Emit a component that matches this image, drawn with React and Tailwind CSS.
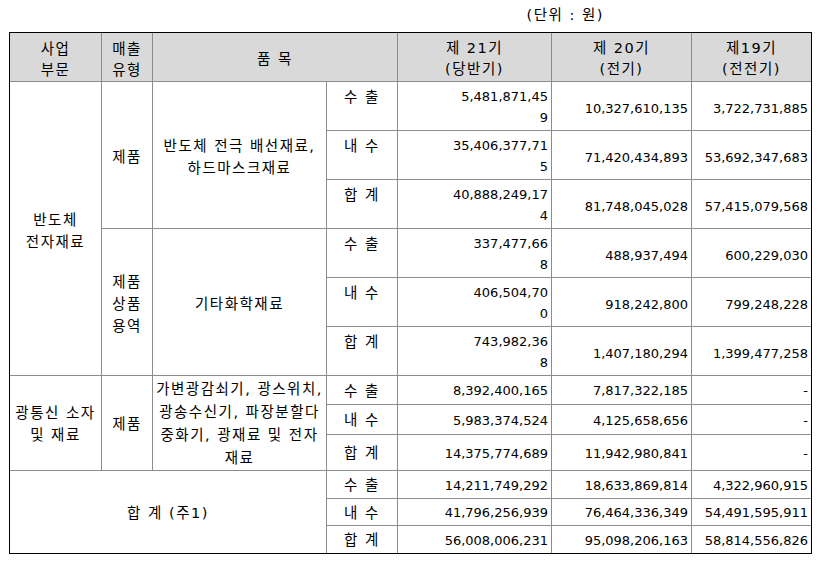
const kr = "font-['DejaVu_Sans','Noto_Sans_CJK_KR',sans-serif] text-[14.5px] tracking-[1.5px] leading-[22px]";
const hd = "font-['DejaVu_Sans','Noto_Sans_CJK_KR',sans-serif] text-[14.5px] tracking-[1.5px] leading-[21px]";
const num = "font-['DejaVu_Sans','Noto_Sans_CJK_KR',sans-serif] text-[13px] leading-[21px]";

// border helpers: every cell draws its right and bottom line, the wrapper draws the outer frame
const Cell = ({ children, className = '', last = false, bottom = false, ...rest }) => (
  <td
    {...rest}
    className={
      (last ? '' : 'border-r ') +
      (bottom ? '' : 'border-b ') +
      'border-[#8c8c8c] p-0 text-black whitespace-nowrap ' +
      className
    }
  >
    {children}
  </td>
);

const Num = ({ v, last, bottom, wrap, tall }) => (
  <Cell
    last={last}
    bottom={bottom}
    className={
      num +
      ' text-right pr-[3px] ' +
      (wrap ? 'align-top pt-[4px]' : tall ? 'align-middle pt-[4px]' : 'align-middle pt-[1px]')
    }
  >
    {wrap ? (
      <>
        {wrap[0]}
        <br />
        {wrap[1]}
      </>
    ) : (
      v
    )}
  </Cell>
);

const Label = ({ text, top, bottom }) => (
  <Cell bottom={bottom} className={kr + ' text-center ' + (top ? 'align-top pt-[4px]' : 'align-middle pt-[1px]')}>
    {text}
  </Cell>
);

const App = () => {
  return (
    <div className="w-[825px] h-[565px] bg-white pt-[5px] pl-[9px]">
      <div className={hd + ' w-[595px] text-right h-[21px] mb-[6px] text-black'}>(단위 : 원)</div>

      <div className="w-[803px] border border-black">
        <table className="table-fixed w-[801px] border-separate border-spacing-0">
          <colgroup>
            <col className="w-[92px]" />
            <col className="w-[51px]" />
            <col className="w-[174px]" />
            <col className="w-[71px]" />
            <col className="w-[154px]" />
            <col className="w-[140px]" />
            <col className="w-[119px]" />
          </colgroup>
          <thead>
            <tr className="h-[49px] bg-[#d9d9d9]">
              <Cell className={hd + ' text-center align-middle pt-[6px]'}>
                사업
                <br />
                부문
              </Cell>
              <Cell className={hd + ' text-center align-middle pt-[6px]'}>
                매출
                <br />
                유형
              </Cell>
              <Cell colSpan={2} className={hd + ' text-center align-middle pt-[4px]'}>
                품 목
              </Cell>
              <Cell className={hd + ' text-center align-middle pt-[4px]'}>
                제 21기
                <br />
                (당반기)
              </Cell>
              <Cell className={hd + ' text-center align-middle pt-[4px]'}>
                제 20기
                <br />
                (전기)
              </Cell>
              <Cell last className={hd + ' text-center align-middle pt-[4px]'}>
                제19기
                <br />
                (전전기)
              </Cell>
            </tr>
          </thead>
          <tbody>
            {/* 반도체 전자재료 - 제품 */}
            <tr className="h-[49px]">
              <Cell rowSpan={6} className={kr + ' text-center align-middle pt-[4px]'}>
                반도체
                <br />
                전자재료
              </Cell>
              <Cell rowSpan={3} className={kr + ' text-center align-middle pt-[4px]'}>
                제품
              </Cell>
              <Cell rowSpan={3} className={kr + ' text-center align-middle pt-[4px]'}>
                반도체 전극 배선재료,
                <br />
                하드마스크재료
              </Cell>
              <Label text="수 출" top />
              <Num wrap={['5,481,871,45', '9']} />
              <Num v="10,327,610,135" tall />
              <Num v="3,722,731,885" tall last />
            </tr>
            <tr className="h-[49px]">
              <Label text="내 수" top />
              <Num wrap={['35,406,377,71', '5']} />
              <Num v="71,420,434,893" tall />
              <Num v="53,692,347,683" tall last />
            </tr>
            <tr className="h-[49px]">
              <Label text="합 계" top />
              <Num wrap={['40,888,249,17', '4']} />
              <Num v="81,748,045,028" tall />
              <Num v="57,415,079,568" tall last />
            </tr>

            {/* 반도체 전자재료 - 제품 상품 용역 */}
            <tr className="h-[49px]">
              <Cell rowSpan={3} className={kr + ' text-center align-middle pt-[4px]'}>
                제품
                <br />
                상품
                <br />
                용역
              </Cell>
              <Cell rowSpan={3} className={kr + ' text-center align-middle pt-[4px]'}>
                기타화학재료
              </Cell>
              <Label text="수 출" top />
              <Num wrap={['337,477,66', '8']} />
              <Num v="488,937,494" tall />
              <Num v="600,229,030" tall last />
            </tr>
            <tr className="h-[49px]">
              <Label text="내 수" top />
              <Num wrap={['406,504,70', '0']} />
              <Num v="918,242,800" tall />
              <Num v="799,248,228" tall last />
            </tr>
            <tr className="h-[49px]">
              <Label text="합 계" top />
              <Num wrap={['743,982,36', '8']} />
              <Num v="1,407,180,294" tall />
              <Num v="1,399,477,258" tall last />
            </tr>

            {/* 광통신 소자 및 재료 */}
            <tr className="h-[29px]">
              <Cell rowSpan={3} className={kr + ' text-center align-middle pt-[2px]'}>
                광통신 소자
                <br />
                및 재료
              </Cell>
              <Cell rowSpan={3} className={kr + ' text-center align-middle pt-[2px]'}>
                제품
              </Cell>
              <Cell rowSpan={3} className={kr + ' text-center align-middle leading-[23px] pt-[2px]'}>
                가변광감쇠기, 광스위치,
                <br />
                광송수신기, 파장분할다
                <br />
                중화기, 광재료 및 전자
                <br />
                재료
              </Cell>
              <Label text="수 출" />
              <Num v="8,392,400,165" />
              <Num v="7,817,322,185" />
              <Num v="-" last />
            </tr>
            <tr className="h-[30px]">
              <Label text="내 수" />
              <Num v="5,983,374,524" />
              <Num v="4,125,658,656" />
              <Num v="-" last />
            </tr>
            <tr className="h-[36px]">
              <Label text="합 계" />
              <Num v="14,375,774,689" />
              <Num v="11,942,980,841" />
              <Num v="-" last />
            </tr>

            {/* 합계 */}
            <tr className="h-[28px]">
              <Cell rowSpan={3} colSpan={3} bottom className={kr + ' text-center align-middle pt-[2px]'}>
                합 계 (주1)
              </Cell>
              <Label text="수 출" />
              <Num v="14,211,749,292" />
              <Num v="18,633,869,814" />
              <Num v="4,322,960,915" last />
            </tr>
            <tr className="h-[27px]">
              <Label text="내 수" />
              <Num v="41,796,256,939" />
              <Num v="76,464,336,349" />
              <Num v="54,491,595,911" last />
            </tr>
            <tr className="h-[27px]">
              <Label text="합 계" bottom />
              <Num v="56,008,006,231" bottom />
              <Num v="95,098,206,163" bottom />
              <Num v="58,814,556,826" last bottom />
            </tr>
          </tbody>
        </table>
      </div>
    </div>
  );
};

export default App;
